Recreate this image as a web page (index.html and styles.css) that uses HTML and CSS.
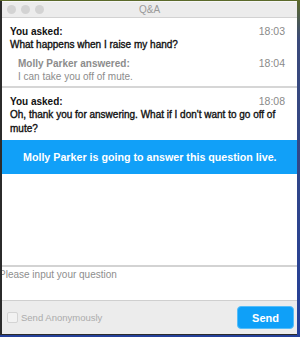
FILE: index.html
```html
<!DOCTYPE html>
<html lang="en">
<head>
    <meta charset="UTF-8">
    <meta name="viewport" content="width=device-width, initial-scale=1.0">
    <title>Q&amp;A</title>
    <link rel="stylesheet" href="styles.css">
</head>
<body>
    <div class="window">
        <div class="titlebar">
            <div class="lights">
                <span class="light"></span>
                <span class="light"></span>
                <span class="light"></span>
            </div>
            <div class="title">Q&amp;A</div>
        </div>

        <div class="messages">
            <div class="question">
                <div class="row">
                    <span class="label">You asked:</span>
                    <span class="time">18:03</span>
                </div>
                <p class="text">What happens when I raise my hand?</p>
                <div class="answer">
                    <div class="row">
                        <span class="label">Molly Parker answered:</span>
                        <span class="time">18:04</span>
                    </div>
                    <p class="text">I can take you off of mute.</p>
                </div>
            </div>

            <div class="question last">
                <div class="row">
                    <span class="label">You asked:</span>
                    <span class="time">18:08</span>
                </div>
                <p class="text">Oh, thank you for answering. What if I don't want to go off of mute?</p>
            </div>

            <div class="notice">Molly Parker is going to answer this question live.</div>
        </div>

        <div class="compose">
            <textarea placeholder="Please input your question"></textarea>
        </div>

        <div class="footer">
            <label class="anon">
                <span class="checkbox"></span>
                Send Anonymously
            </label>
            <button>Send</button>
        </div>
    </div>
</body>
</html>
```

FILE: styles.css
```css
body {
    margin: 0;
    height: 337px;
    background: linear-gradient(to bottom, #5c6a2a 0px, #3b4a7a 40px, #24409a 100%);
    font-family: "Liberation Sans", Arial, sans-serif;
    overflow: hidden;
}
.window {
    display: flex;
    flex-direction: column;
    height: 333px;
    margin: 1px 3px 0 0;
    border-left: 2px solid #2b2b2b;
    border-bottom: 1px solid #2b2b2b;
    background-color: white;
}
.titlebar {
    position: relative;
    height: 15px;
    background-color: #ececec;
    border-top: 1px solid #f7f7f7;
    border-bottom: 1px solid #d2d2d2;
    display: flex;
    align-items: center;
}
.lights {
    display: flex;
    gap: 5px;
    padding-left: 5px;
}
.light {
    width: 9px;
    height: 9px;
    border-radius: 50%;
    background-color: #d3d3d3;
}
.title {
    position: absolute;
    left: 0;
    right: 0;
    top: 2px;
    text-align: center;
    font-size: 10px;
    color: #9a9a9a;
}
.messages {
    flex: 1;
    background-color: white;
}
.question {
    padding: 6px 12px 3px 8px;
    border-bottom: 2px solid #d6d6d6;
    color: #111;
}
.question.last {
    padding-bottom: 4px;
    border-bottom: none;
}
.row {
    display: flex;
    justify-content: space-between;
    align-items: baseline;
    height: 14px;
    line-height: 14px;
}
.label {
    font-size: 10px;
    font-weight: bold;
}
.time {
    font-size: 10.5px;
    color: #8a8a8a;
}
.text {
    margin: 0;
    font-size: 10px;
    line-height: 14px;
    -webkit-text-stroke: 0.35px #111;
}
.answer {
    margin-top: 4px;
    padding-left: 8px;
    color: #8c8c8c;
}
.answer .label {
    color: #8c8c8c;
}
.answer .text {
    line-height: 13px;
    -webkit-text-stroke: 0;
}
.notice {
    height: 34px;
    line-height: 34px;
    padding-left: 21px;
    background-color: #11a0f8;
    color: white;
    font-size: 10.7px;
    font-weight: bold;
}
.compose {
    height: 33px;
    border-top: 2px solid #d3d3d3;
}
textarea {
    display: block;
    width: 100%;
    height: 100%;
    box-sizing: border-box;
    border: none;
    padding: 2px 0 0 0;
    margin: 0;
    text-indent: -3px;
    resize: none;
    outline: none;
    font-family: "Liberation Sans", Arial, sans-serif;
    font-size: 10px;
}
textarea::placeholder {
    color: #8e8e8e;
}
.footer {
    height: 33px;
    background-color: #ececec;
    border-top: 1px solid #cfcfcf;
    display: flex;
    align-items: center;
    justify-content: space-between;
    padding: 0 3px 0 5px;
}
.anon {
    display: flex;
    align-items: center;
    gap: 3px;
    font-size: 9.5px;
    color: #ababab;
}
.checkbox {
    width: 9px;
    height: 9px;
    border: 1px solid #d4d4d4;
    border-radius: 2px;
    background-color: #f2f2f2;
}
button {
    width: 57px;
    height: 23px;
    background-color: #0fa0f8;
    color: white;
    border: 1px solid #55bdf9;
    border-radius: 4px;
    font-family: "Liberation Sans", Arial, sans-serif;
    font-size: 11px;
    font-weight: bold;
}
```
